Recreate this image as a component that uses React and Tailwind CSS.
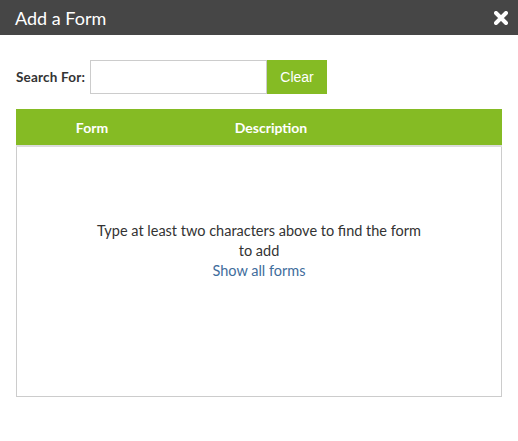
import React from 'react'

function CloseIcon() {
  return (
    <svg width="14" height="14" viewBox="0 0 14 14" className="block">
      <path d="M2 2 L12 12 M12 2 L2 12" stroke="#ffffff" strokeWidth="4" strokeLinecap="round" />
    </svg>
  )
}

export default function App() {
  return (
    <div className="w-[518px] h-[441px] bg-white font-['Lato','Noto_Sans',sans-serif] text-[#333333]">
      {/* Title bar */}
      <div className="h-[35px] bg-[#464646] flex items-center justify-between pl-[15px] pr-[10px]">
        <h2 className="text-white text-[18px] leading-none">Add a Form</h2>
        <button className="p-0">
          <CloseIcon />
        </button>
      </div>

      <div className="px-4">
        {/* Search row */}
        <div className="flex items-center mt-[25px] h-[34px]">
          <label className="w-[74px] text-[13.5px] font-bold text-[#333333] tracking-[0.2px]">Search For:</label>
          <input
            type="text"
            className="w-[177px] h-[34px] border border-[#cccccc] px-2 text-[13px] outline-none"
          />
          <button className="w-[60px] h-[34px] bg-[#85bb24] text-white text-[14px] font-['Liberation_Sans',Arial,sans-serif]">
            Clear
          </button>
        </div>

        {/* Table header */}
        <div className="mt-[15px] h-[36px] bg-[#85bb24] flex items-center text-white text-[14px] font-bold">
          <div className="w-[152px] text-center">Form</div>
          <div className="w-[206px] text-center">Description</div>
        </div>
        <div className="h-[2px] bg-[#dcdcdc]" />

        {/* Results area */}
        <div className="h-[250px] border border-[#cccccc] border-t-0 flex flex-col items-center pt-[74px] text-[14.5px] leading-[20px] text-center">
          <p className="w-[334px]">Type at least two characters above to find the form to add</p>
          <a href="#" className="text-[#3f6d9c]">Show all forms</a>
        </div>
      </div>
    </div>
  )
}
